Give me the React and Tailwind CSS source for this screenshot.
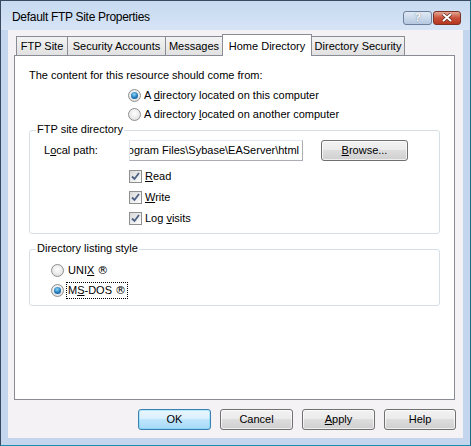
import React from 'react'

const font = { fontFamily: '"Liberation Sans", Arial, sans-serif' }
const reg = { fontFamily: '"DejaVu Sans", sans-serif' }

function Radio({ checked }) {
  return (
    <span className="relative inline-block w-[13px] h-[13px] rounded-full border border-[#8e8f8f] bg-[radial-gradient(circle_at_50%_40%,#ffffff,#d8d8d8)] shrink-0">
      {checked && (
        <span className="absolute left-[2px] top-[2px] w-[7px] h-[7px] rounded-full bg-[radial-gradient(circle_at_45%_35%,#8ad8fa,#1a6fb3_60%,#0d4f8a)]" />
      )}
    </span>
  )
}

function Check() {
  return (
    <span className="relative inline-block w-[13px] h-[13px] border border-[#8e8f8f] bg-[linear-gradient(135deg,#d8d8d8,#ffffff)] shrink-0">
      <svg className="absolute left-[1px] top-[1px]" width="9" height="9" viewBox="0 0 9 9">
        <path d="M1 4.5 L3.5 7 L8 1" fill="none" stroke="#4d6185" strokeWidth="1.8" />
      </svg>
    </span>
  )
}

function Button({ children, def, className = '' }) {
  return (
    <div
      className={
        'h-[21px] flex items-center justify-center rounded-[3px] border text-[11px] text-black ' +
        (def
          ? 'border-[#3c7fb1] bg-[linear-gradient(#eaf6fd_0%,#d9f0fc_45%,#bee6fd_50%,#a7d9f5_100%)] shadow-[inset_0_0_0_1px_#48d2fb55] '
          : 'border-[#707070] bg-[linear-gradient(#f2f2f2_0%,#ebebeb_45%,#dddddd_50%,#cfcfcf_100%)] shadow-[inset_0_0_0_1px_#ffffffaa] ') +
        className
      }
    >
      {children}
    </div>
  )
}

function Tab({ children, active, w }) {
  if (active)
    return (
      <div className={'relative z-10 h-[22px] -mb-[1px] bg-white border border-b-0 border-[#898c95] text-[11px] flex justify-center pt-[3px] ' + w}>
        {children}
      </div>
    )
  return (
    <div className={'h-[19px] border border-b-0 border-l-0 first:border-l border-[#898c95] bg-[linear-gradient(#f3f3f3,#e1e1e1)] text-[11px] flex items-center justify-center pt-[1px] ' + w}>
      {children}
    </div>
  )
}

export default function App() {
  return (
    <div style={font} className="w-[471px] h-[446px] bg-[#c3d6ee] border border-[#3a4a5e] border-r-[#1b6a86] border-b-[#1b8cb0] flex flex-col text-black overflow-hidden">
      <div className="h-[29px] flex items-center pl-[11px] pr-[9px] bg-[linear-gradient(#c7daf1,#d6e4f5)]">
        <span className="text-[12px] mt-[3px] tracking-[-0.3px]">Default FTP Site Properties</span>
        <div className="ml-auto flex mt-[4px]">
          <div className="w-[29px] h-[14px] rounded-[3px] border border-[#6d7f99] bg-[linear-gradient(#dfe9f5,#b5c8e0)] flex items-center justify-center text-[11px] font-bold text-white [text-shadow:0_0_1px_#3d4f6a]">
            ?
          </div>
          <div className="w-[28px] h-[14px] ml-[1px] rounded-[3px] border border-[#7d3226] bg-[linear-gradient(#e3a693,#c9503a_50%,#b6361f)] flex items-center justify-center">
            <svg width="12" height="9" viewBox="0 0 12 9">
              <path d="M2 1 L10 8 M10 1 L2 8" stroke="#5a2016" strokeWidth="3.2" />
              <path d="M2 1 L10 8 M10 1 L2 8" stroke="#ffffff" strokeWidth="2" />
            </svg>
          </div>
        </div>
      </div>

      <div className="flex-1 mx-[7px] mb-[7px] bg-[#f5f2f5] flex flex-col pt-[5px]">
        <div className="flex pl-[8px] items-end h-[20px]">
          <Tab w="w-[52px]">FTP Site</Tab>
          <Tab w="w-[98px]">Security Accounts</Tab>
          <Tab w="w-[57px]">Messages</Tab>
          <Tab active w="w-[90px] -ml-[1px]">Home Directory</Tab>
          <Tab w="w-[93px]">Directory Security</Tab>
        </div>
        <div className="ml-[6px] mr-[8px] h-[345px] bg-white border border-[#898c95] text-[11px] px-[14px]">
          <div className="mt-[13px] h-[13px] leading-[13px]">The content for this resource should come from:</div>
          <div className="mt-[7px] ml-[99px] flex items-center gap-[3px] h-[13px]">
            <Radio checked />
            <span>A <u>d</u>irectory located on this computer</span>
          </div>
          <div className="mt-[6px] ml-[99px] flex items-center gap-[3px] h-[13px]">
            <Radio />
            <span>A directory <u>l</u>ocated on another computer</span>
          </div>

          <div className="relative mt-[9px] h-[104px] border border-[#d5dfe5] rounded-[3px]">
            <span className="absolute -top-[8px] left-[6px] bg-white px-[1px] leading-[13px]">FTP site directory</span>
            <div className="flex items-center mt-[9px]">
              <span className="ml-[14px] w-[85px]">L<u>o</u>cal path:</span>
              <div className="w-[174px] h-[21px] border border-[#abadb3] border-t-[#e3e9ef] border-l-[#e2e3ea] overflow-hidden">
                <div className="h-full flex justify-end items-center pr-[3px] whitespace-nowrap">
                  ogram Files\Sybase\EAServer\html
                </div>
              </div>
              <Button className="ml-[18px] w-[87px]">
                <span><u>B</u>rowse...</span>
              </Button>
            </div>
            <div className="ml-[99px] mt-[9px] flex flex-col gap-[8px]">
              <div className="flex items-center gap-[3px] h-[13px]"><Check /><span><u>R</u>ead</span></div>
              <div className="flex items-center gap-[3px] h-[13px]"><Check /><span><u>W</u>rite</span></div>
              <div className="flex items-center gap-[3px] h-[13px]"><Check /><span>Log <u>v</u>isits</span></div>
            </div>
          </div>

          <div className="relative mt-[15px] h-[57px] border border-[#d5dfe5] rounded-[3px]">
            <span className="absolute -top-[8px] left-[6px] bg-white px-[1px] leading-[13px]">Directory listing style</span>
            <div className="ml-[21px] mt-[14px] flex items-center gap-[2px] h-[13px]">
              <Radio />
              <span className="px-[2px]">UNI<u>X</u> <span style={reg}>®</span></span>
            </div>
            <div className="ml-[21px] mt-[5px] flex items-center gap-[2px] h-[16px]">
              <Radio checked />
              <span className="px-[1px] border border-dotted border-black leading-[14px]">M<u>S</u>-DOS <span style={reg}>®</span></span>
            </div>
          </div>
        </div>

        <div className="flex justify-end gap-[9px] mt-[9px] pr-[7px]">
          <Button def className="w-[73px]">OK</Button>
          <Button className="w-[73px]">Cancel</Button>
          <Button className="w-[73px]"><span><u>A</u>pply</span></Button>
          <Button className="w-[72px]">Help</Button>
        </div>
      </div>
    </div>
  )
}
